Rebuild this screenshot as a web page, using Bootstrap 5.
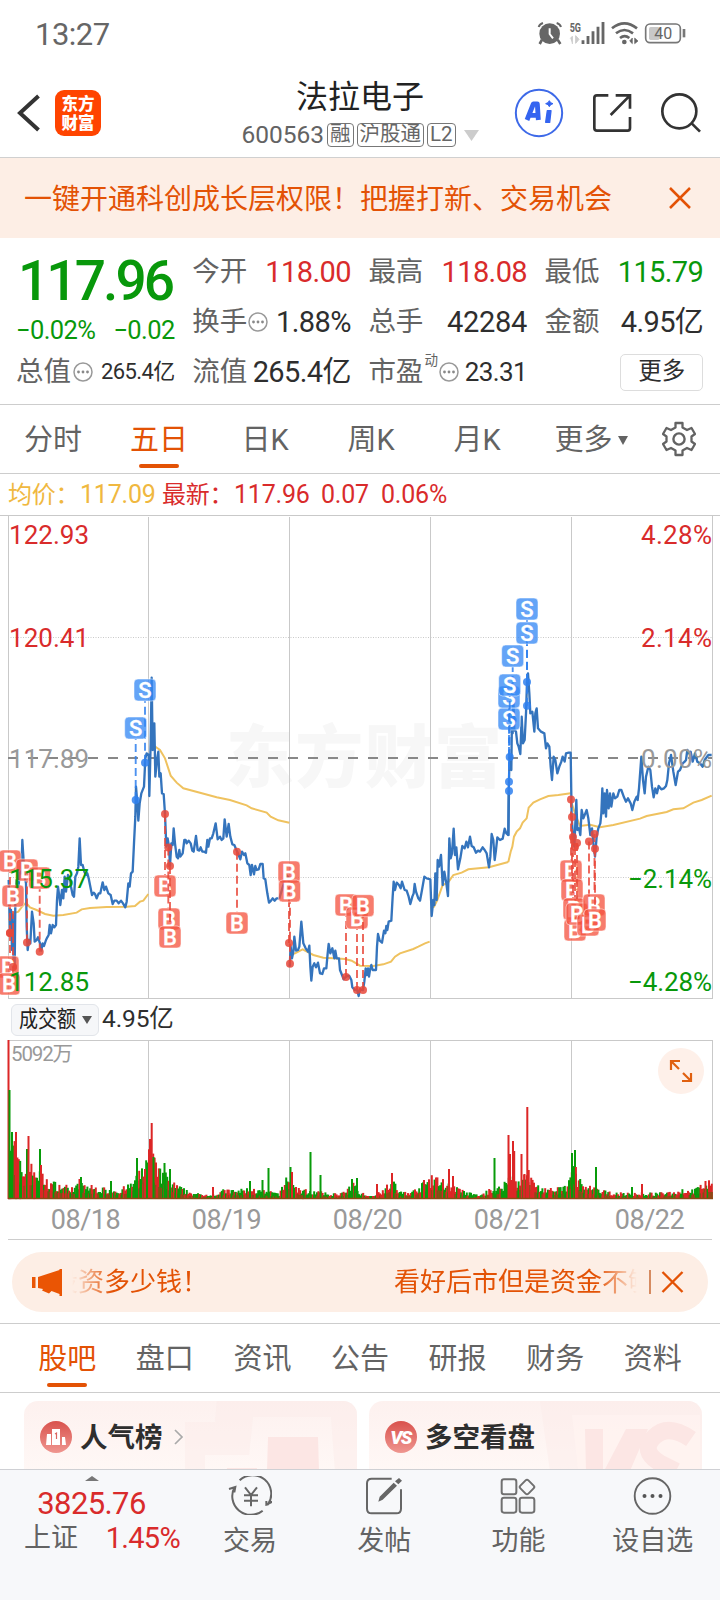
<!DOCTYPE html>
<html lang="zh-CN">
<head>
<meta charset="utf-8">
<meta name="viewport" content="width=device-width, initial-scale=1">
<title>法拉电子 600563</title>
<link href="https://cdn.jsdelivr.net/npm/bootstrap@5.3.0/dist/css/bootstrap.min.css" rel="stylesheet">
<style>
:root{--up:#d92b2b;--down:#08980b;--brand:#e35205;--ink:#2e2e2e;--sub:#636363;--rule:#cdcdcd}
body{width:720px;height:1600px;overflow:hidden;background:#fff;color:var(--ink);font-family:Roboto,"Noto Sans CJK SC",sans-serif;line-height:1}
svg{display:block;flex:none}
svg text{font-family:Roboto,"Noto Sans CJK SC",sans-serif}
.up{color:var(--up)}.down{color:var(--down)}.brand{color:var(--brand)}.sub{color:var(--sub)}
.statusbar{height:72px;padding:0 33px 4px 35px;color:#666}
.clock{font-size:31px;letter-spacing:-.5px}
.topbar{height:86px;display:grid;grid-template-columns:1fr auto 1fr;border-bottom:1px solid #d0d0d0}
.stock-title{font-size:32px;line-height:36px;color:#222;margin-top:7px}
.code{font-size:24.5px}
.tag{border:1.5px solid #777;border-radius:4px;height:24px;font-size:20.5px;line-height:21px;padding:0 2px;color:#666}
.notice{height:80px;background:#fdeee5;padding:0 28px 0 24px;font-size:28px}
.notice span{padding-top:3px}
.quote{height:167px;padding:9px 16px 0;display:grid;grid-template-columns:repeat(4,158.7px);column-gap:17.5px;border-bottom:1px solid var(--rule)}
.cell{height:50px;display:flex;align-items:center;justify-content:space-between;white-space:nowrap;font-size:29px;letter-spacing:-.6px}
.cell .sub{font-size:27.5px;letter-spacing:0}
.price{height:64px;font-size:55px;font-weight:500;letter-spacing:-2.9px;padding-left:2px;line-height:68px}
.chg{height:36px;font-size:25.5px;letter-spacing:-.6px;line-height:39px}
.more-btn{width:83px;height:37px;border:1px solid #ddd;border-radius:5px;font-size:23.5px;line-height:33px;letter-spacing:0;text-align:center;margin-left:auto}
.period{height:69px;border-bottom:1px solid var(--rule);font-size:29px;color:var(--sub)}
.period>div,.sections>div{position:relative;display:flex;align-items:center;justify-content:center;padding-top:3px}
.on{color:var(--brand)}
.on::after{content:"";position:absolute;left:50%;margin-left:-20px;width:40px;height:4px;border-radius:2px;background:var(--brand);bottom:5px}
.legend-row{height:41px;font-size:25px;padding-left:8px;letter-spacing:-.2px;white-space:nowrap}
.volhead{height:41px;padding-left:11px}
.vol-btn{width:88px;height:32px;border:1px solid #e2e5ea;border-radius:6px;background:#f6f7f9}
.dates{height:40px;border-bottom:1px solid var(--rule);margin:0 8px;padding:2px 0 0 7px;font-size:27px;color:#999;letter-spacing:-.5px}
.dates div{width:141px;text-align:center;flex:none}
.pill{height:60px;margin:12px 12px 11px;border-radius:30px;background:#fdeee5;padding-left:20px}
.ticker{width:565px;overflow:hidden;white-space:nowrap;font-size:26px;line-height:38px;margin-left:10px;-webkit-mask-image:linear-gradient(90deg,transparent,#000 40px,#000 525px,transparent);mask-image:linear-gradient(90deg,transparent,#000 40px,#000 525px,transparent)}
.sections{height:70px;border-top:1px solid var(--rule);border-bottom:1px solid var(--rule);padding:0 18.5px;font-size:29px;color:var(--sub)}
.sections>div{flex:1}
.cards{height:76px;padding:8px 18px 0 24px;gap:12px;overflow:hidden}
.promo{width:333px;height:90px;border-radius:14px;background:linear-gradient(#fdf1ef,#fff8f6 80%);overflow:hidden;position:relative}
.promo .backdrop{position:absolute;right:0;top:0}
.promo-head{position:relative;height:71px;padding-left:16px;font-size:27.500px;font-weight:700}
.promo-head span{padding-top:2px}
.dock{height:131px;background:#f7f8fa;border-top:1px solid #cfd0d4}
.dock-item{width:134.2px;font-size:27px;color:var(--sub);padding-top:6px;text-align:center}
.dock-item svg{margin:0 auto 13px}
.index-box{width:183px}
</style>
</head>
<body>
<header>
  <div class="statusbar d-flex align-items-center justify-content-between">
    <span class="clock">13:27</span>
    <svg width="150" height="26" viewBox="530 66 450 78">
      <g fill="#666"><circle cx="568" cy="104" r="31"/><path d="M545 122l-7 13M592 122l8 13" stroke="#666" stroke-width="8"/></g>
      <path d="M535 84q3-9 13-12M602 84q-3-9-13-12" fill="none" stroke="#666" stroke-width="6"/>
      <path d="M568 88v17l10 13" fill="none" stroke="#fff" stroke-width="6"/>
      <text x="628" y="98" font-size="36" font-weight="700" fill="#666" textLength="34" lengthAdjust="spacingAndGlyphs">5G</text>
      <path d="M630 118l6-6v23M646 110v23l10-12z" stroke="#ccc" fill="#ccc" stroke-width="3"/>
      <path d="M668 124v11M683 111v24M698 97v38M713 83v52M728 69v66" stroke="#666" stroke-width="8.500"/>
      <g fill="none" stroke="#666" stroke-width="8"><path d="M755 88q37-30 75 0M767 103q25-20 51 0M779 117q14-11 28 0"/></g>
      <circle cx="792" cy="129" r="7" fill="#666"/><path d="M816 117v17l-8-8zM823 117v17l10-8z" fill="#666" stroke="#666" stroke-width="2"/>
      <rect x="856" y="75" width="104" height="56" rx="13" fill="none" stroke="#777" stroke-width="5"/>
      <rect x="866" y="84" width="32" height="39" rx="5" fill="#c8c8c8"/><path d="M971 90v25" stroke="#777" stroke-width="8"/>
      <text x="882" y="120" font-size="50" fill="#666" textLength="54" lengthAdjust="spacingAndGlyphs">40</text>
    </svg>
  </div>
  <div class="topbar">
    <div class="d-flex align-items-center pb-1" style="padding-left:17px">
      <svg width="24" height="38" viewBox="0 0 24 38"><path d="M21.500 2L3 19l18.500 17" fill="none" stroke="#333" stroke-width="4"/></svg>
      <svg style="margin-left:14px" width="46" height="46" viewBox="0 0 46 46"><rect width="46" height="46" rx="9" fill="#ff4400"/><g fill="#fff" font-weight="900" font-size="16.500" text-anchor="middle"><text x="23" y="19.500">东方</text><text x="23" y="38.500">财富</text></g></svg>
    </div>
    <div class="text-center">
      <div class="stock-title">法拉电子</div>
      <div class="sub d-flex align-items-center justify-content-center mt-2" style="gap:3px">
        <span class="code">600563</span><span class="tag">融</span><span class="tag">沪股通</span><span class="tag">L2</span>
        <svg style="margin-left:5px" width="15" height="11"><path d="M0 0h15L7.500 11z" fill="#ccc"/></svg>
      </div>
    </div>
    <div class="d-flex align-items-center justify-content-end pb-1" style="gap:26.5px;padding-right:17px">
      <svg width="50" height="50" viewBox="462 264 150 150"><circle cx="537" cy="339" r="69.500" fill="#fff" stroke="#3d69e8" stroke-width="6"/><g stroke="#3464f0" stroke-linejoin="round"><path d="M501 360L520 312h12l3 48M508 346h26" fill="none" stroke-width="14.500"/><path d="M562 332h11l-4 35h-12z" fill="#3464f0" stroke-width="4"/><path d="M568 302l4 6 7 3-7 3-4 6-4-6-7-3 7-3z" fill="#3464f0" stroke-width="3"/></g></svg>
      <svg width="42" height="42" viewBox="690 276 126 126"><g fill="none" stroke="#333" stroke-width="8"><path d="M742 286h-34q-8 0-8 8v90q0 8 8 8h92q7 0 7-8v-33"/><path d="M764 286h43v40M807 286l-58 59"/></g></svg>
      <svg width="44" height="44" viewBox="896 272 132 132"><g fill="none" stroke="#333" stroke-width="8"><circle cx="957" cy="333" r="51"/><path d="M994 369l25 25"/></g></svg>
    </div>
  </div>
</header>

<div class="notice brand d-flex align-items-center justify-content-between">
  <span>一键开通科创成长层权限！把握打新、交易机会</span>
  <svg width="24" height="24"><path d="M2 2l20 20M22 2L2 22" stroke="#e35205" stroke-width="2.500"/></svg>
</div>

<section class="quote">
  <div>
    <div class="price down">117.96</div>
    <div class="chg down d-flex justify-content-between"><span>−0.02%</span><span>−0.02</span></div>
    <div class="cell"><span class="sub d-flex align-items-center" style="gap:2px">总值<svg width="20" height="20"><use href="#dots"/></svg></span><span style="font-size:22px">265.4亿</span></div>
  </div>
  <div>
    <div class="cell"><span class="sub">今开</span><span class="up">118.00</span></div>
    <div class="cell"><span class="sub d-flex align-items-center" style="gap:1px">换手<svg width="20" height="20"><use href="#dots"/></svg></span><span>1.88%</span></div>
    <div class="cell"><span class="sub">流值</span><span>265.4亿</span></div>
  </div>
  <div>
    <div class="cell"><span class="sub">最高</span><span class="up">118.08</span></div>
    <div class="cell"><span class="sub">总手</span><span style="letter-spacing:-.3px">42284</span></div>
    <div class="cell"><span class="sub d-flex align-items-center">市盈<sup style="font-size:13.500px;top:-12px;margin:0 1px">动</sup><svg width="20" height="20"><use href="#dots"/></svg></span><span style="font-size:26px">23.31</span></div>
  </div>
  <div>
    <div class="cell"><span class="sub">最低</span><span class="down">115.79</span></div>
    <div class="cell"><span class="sub">金额</span><span>4.95亿</span></div>
    <div class="cell"><span class="more-btn">更多</span></div>
  </div>
</section>
<svg width="0" height="0" style="position:absolute"><defs><g id="dots"><circle cx="10" cy="10" r="9" fill="none" stroke="#999" stroke-width="1.500"/><g fill="#888"><circle cx="5.500" cy="10" r="1.400"/><circle cx="10" cy="10" r="1.400"/><circle cx="14.500" cy="10" r="1.400"/></g></g></defs></svg>

<nav class="period d-flex">
  <div style="width:106px">分时</div><div class="on" style="width:106px">五日</div><div style="width:106px">日K</div><div style="width:106px">周K</div><div style="width:106px">月K</div>
  <div style="width:122px;gap:5px">更多<svg width="10" height="9"><path d="M0 0h10L5 9z" fill="#636363"/></svg></div>
  <div class="ms-auto pt-0" style="padding-right:24px"><svg width="34" height="36" viewBox="-17 -18 34 36"><path d="M-3.500-16h7v4.500l4.500 2.500 4.500-2 3.500 6-3.500 2.500v5l3.500 2.500-3.500 6-4.500-2-4.500 2.500V16h-7v-4.500L-8 9l-4.500 2-3.500-6 3.500-2.500v-5L-16-5l3.500-6L-8-9l4.500-2.500z" fill="none" stroke="#636363" stroke-width="2.300" stroke-linejoin="round"/><circle r="5.600" fill="none" stroke="#636363" stroke-width="2.400"/></svg></div>
</nav>

<div class="legend-row d-flex align-items-center up">
  <span style="width:72px;color:#f0b840;font-size:24px">均价：</span><span style="width:82px;color:#f0b840">117.09</span><span style="width:72px;font-size:24px">最新：</span><span style="width:87px">117.96</span><span style="width:60px">0.07</span><span>0.06%</span>
</div>

<svg id="priceChart" width="720" height="484" viewBox="0 515 720 484">
  <text x="226" y="782" font-size="68" font-weight="900" fill="#f7f7f7" textLength="276">东方财富</text>
  <g stroke="#c9c9c9" stroke-width="1"><path d="M0 515.500H720M8.500 515v483M148.500 517v481M289.500 517v481M430.500 517v481M571.500 517v481M712.500 515v483M8 998.500h705" fill="none"/><path d="M8 637.500h704M8 877.500h704" stroke-dasharray="1 1.500" /></g>
  <path d="M8 758H712" stroke="#888" stroke-width="1.800" stroke-dasharray="10 10"/>
  <g fill="none" stroke="#efc25f" stroke-width="6">
    <g transform="translate(0,510) scale(.33333)"><polyline points="26,1230 40,1210 55,1205 66,1190 78,1178 90,1192 110,1200 135,1212 160,1217 190,1215 230,1208 245,1198 270,1194 320,1191 380,1190 405,1188 420,1175 430,1172 445,1152"/><polyline points="463,708 480,720 495,745 512,797 530,818 550,835 600,848 650,862 690,870 740,886 755,895 800,908 812,920 835,931 868,938"/></g>
    <g transform="translate(280,740) scale(.33333)"><polyline points="29,645 45,640 68,628 85,637 100,645 130,653 160,655 195,657 215,662 240,677 280,678 310,673 333,665 345,650 360,640 400,627 415,620 435,610 449,605"/><polyline points="451,505 462,500 472,480 488,435 504,428 520,405 545,398 565,388 627,382 685,366"/></g>
    <g transform="translate(480,580) scale(.33333)"><polyline points="85,846 92,815 97,800 102,770 110,755 120,745 128,728 140,715 146,683 160,668 180,658 205,648 235,645 272,640"/><polyline points="275,670 285,700 300,738 330,734 360,742 400,735 480,716 500,708 560,696 580,688 610,685 640,668 665,660 695,647"/></g>
  </g>
  <g fill="none" stroke="#3474bd" stroke-width="7" stroke-linejoin="round">
    <g transform="translate(0,510) scale(.33333)"><polyline points="26,1110 28,1180 30,1270 33,1200 36,1320 38,1215 41,1370 44,1375 46,1180 50,1110 56,1125 60,1080 64,1090 67,990 70,1040 74,1100 78,1120 80,1250 83,1320 87,1290 91,1300 96,1205 101,1240 104,1295 110,1290 114,1282 120,1300 124,1322 128,1300 132,1308 138,1290 142,1282 146,1275 149,1245 153,1270 158,1245 163,1252 168,1245 171,1170 174,1130 178,1160 181,1185 186,1140 190,1165 194,1100 198,1145 204,1095 210,1105 213,1130 218,1155 222,1160 226,1100 231,1090 235,1070 239,985 243,1065 248,1065 253,1085 258,1095 262,1090 266,1105 270,1125 276,1155 281,1148 285,1152 290,1165 296,1150 301,1150 308,1117 313,1140 318,1130 325,1150 332,1155 338,1182 343,1172 350,1172 356,1180 363,1172 369,1180 376,1192 380,1175 385,1120 389,1130 393,1090 398,1085 402,1000 406,920 408,830 412,880 415,932 419,880 424,850 432,830 436,745 440,730 446,735 448,858 452,700 455,503 458,720 463,640 466,800 471,750 475,725 478,800 482,790 486,850 491,852 495,912 499,1010 503,985 507,1010 510,1067 514,1000 518,1005 521,955 525,1000 530,1040 534,1045 538,1020 541,1040 548,1030 553,990 557,990 560,1000 566,992 572,1000 577,1022 581,1025 588,978 593,1020 598,1022 602,1012 607,1025 612,1025 618,1028 622,990 625,1010 630,985 635,985 640,970 647,940 653,988 660,980 665,990 670,985 674,928 680,980 686,942 691,980 697,1003 703,1005 711,1024 716,1035 721,1048 726,1025 732,1035 736,1030 742,1060 748,1065 752,1095 756,1065 762,1093 766,1068 770,1080 776,1078 781,1062 788,1062 791,1105 796,1108 799,1130 802,1150 807,1178 813,1172 818,1165 824,1172 830,1165 838,1165 850,1125 858,1095 864,1100 868,1120"/></g>
    <g transform="translate(280,740) scale(.33333)"><polyline points="29,680 32,620 36,655 40,635 43,590 48,632 54,630 58,620 64,545 70,610 77,625 84,635 88,617 91,680 94,722 98,680 103,670 108,682 114,668 120,700 127,702 132,685 139,685 143,640 146,612 151,640 157,625 163,655 166,632 170,655 177,655 180,690 186,705 191,718 196,712 202,708 208,708 214,720 217,742 224,750 231,748 236,768 240,748 249,750 253,725 257,685 260,705 264,685 267,710 270,690 274,675 278,690 288,690 291,620 294,582 299,602 306,608 312,572 316,580 319,558 322,570 326,545 334,542 338,470 341,425 345,450 350,428 357,435 362,445 366,425 374,450 380,452 386,470 391,492 397,470 401,460 404,432 408,455 415,475 420,482 426,450 433,410 440,415 451,418 455,528 460,480 463,495 466,400 470,480 473,360 477,380 483,345 488,435 493,395 499,430 504,468 508,295 512,355 516,340 521,266 525,345 529,322 534,388 541,355 547,318 554,325 559,305 564,322 570,290 575,318 581,322 588,338 594,332 600,335 608,322 614,330 620,340 627,382 631,350 635,282 640,300 644,360 648,330 652,292 660,300 668,296 674,266 679,280 685,285 687,150"/></g>
    <g transform="translate(480,580) scale(.33333)"><polyline points="85,767 86,633 88,560 91,530 94,570 96,400 98,460 100,360 103,450 108,455 112,490 116,500 121,522 125,410 129,490 134,480 138,400 141,305 144,280 148,340 151,400 157,395 163,455 166,400 170,385 174,445 183,455 193,460 198,505 202,490 208,500 212,560 216,600 221,530 226,540 232,580 238,560 244,545 248,530 254,545 258,520 266,518 272,518 275,710 279,770 283,800 289,660 292,750 297,745 301,765 305,690 310,715 316,700 320,690 325,715 331,765 336,745 341,800 345,830 350,770 355,745 361,730 364,700 367,625 370,700 374,640 378,710 381,630 386,685 390,640 394,680 400,640 405,655 412,650 418,630 424,630 432,652 438,665 444,655 452,670 457,690 463,665 470,650 473,660 477,625 484,530 489,600 494,640 498,590 505,560 511,570 516,620 521,652 526,625 531,640 536,618 544,628 552,625 558,618 562,600 567,550 573,525 580,575 587,615 594,575 600,570 608,550 614,545 618,540 622,510 626,520 632,515 638,545 645,520 652,545 660,550 668,560 674,540 685,525 695,525"/></g>
  </g>
  <g id="trades"></g>
  <g font-size="26">
    <g fill="#d92b2b"><text x="9" y="544" textLength="80">122.93</text><text x="9" y="647" textLength="80">120.41</text><text x="641" y="544" textLength="71">4.28%</text><text x="641" y="647" textLength="71">2.14%</text></g>
    <g fill="#999"><text x="9" y="768" textLength="80">117.89</text><text x="641" y="768" textLength="71">0.00%</text></g>
    <g fill="#08980b"><text x="9" y="888" textLength="80">115.37</text><text x="9" y="991" textLength="80">112.85</text><text x="628" y="888" textLength="84">−2.14%</text><text x="628" y="991" textLength="84">−4.28%</text></g>
  </g>
</svg>

<div class="volhead d-flex align-items-center">
  <div class="vol-btn"><svg width="86" height="30"><text x="7" y="22" font-size="22.500" fill="#222" textLength="57" lengthAdjust="spacingAndGlyphs">成交额</text><path d="M70 11h10l-5 8z" fill="#555"/></svg></div>
  <span style="font-size:24.500px;margin-left:3px;letter-spacing:-.1px">4.95亿</span>
</div>
<svg id="volumeChart" width="720" height="160" viewBox="0 1040 720 160">
  <path d="M8 1040.500h705M8.500 1040v159M148.500 1040v159M289.500 1040v159M430.500 1040v159M571.500 1040v159M712.500 1040v159" fill="none" stroke="#c9c9c9"/>
  <g id="volumeBars"></g>
  <text x="11" y="1061" font-size="20.500" fill="#999" textLength="62">5092万</text>
  <circle cx="681" cy="1071" r="23" fill="#fef0e9"/>
  <path d="M671 1070v-9h9M671 1061l8 8M691 1073v8h-9M691 1081l-8-8" fill="none" stroke="#e06010" stroke-width="2.200"/>
</svg>
<div class="dates d-flex align-items-center"><div>08/18</div><div>08/19</div><div>08/20</div><div>08/21</div><div>08/22</div></div>

<div class="pill d-flex align-items-center brand">
  <svg width="30" height="27"><path d="M0 8h3.500v11H0zM6 8L27.500 1V0H30v27h-2.500v-2l-8-3-2.500 2.500-7-3 1-1.500-5-1z" fill="#ea5504"/></svg>
  <div class="ticker"><span class="d-inline-block" style="margin-left:-20px;width:342px">投资多少钱！</span><span>看好后市但是资金不够</span></div>
  <svg style="margin-left:12px" width="2" height="24"><path d="M1 0v24" stroke="#c96a35" stroke-width="1.500"/></svg>
  <svg style="margin-left:10px" width="24" height="24"><path d="M1.500 2l20 20M21.500 2l-20 20" stroke="#e35205" stroke-width="2.400"/></svg>
</div>

<nav class="sections d-flex"><div class="on">股吧</div><div>盘口</div><div>资讯</div><div>公告</div><div>研报</div><div>财务</div><div>资料</div></nav>

<div class="cards d-flex">
  <div class="promo">
    <svg class="backdrop" width="180" height="70"><path d="M40 0h140v70h-22L154 16H76l-4 38H28v16H8V21h30z" fill="#fcebe9" opacity=".5"/><path d="M91 36h50l1 34H90z" fill="#fce6e4"/><path d="M50 67h30v4H50z" fill="#fce6e4"/></svg>
    <div class="promo-head d-flex align-items-center">
      <svg width="32" height="32"><defs><linearGradient id="rg" x2="0" y2="1"><stop stop-color="#d9524d"/><stop offset="1" stop-color="#ef9690"/></linearGradient></defs><circle cx="16" cy="16" r="16" fill="url(#rg)"/><path d="M7 13h4v11H6zM12 8h8v16h-8zM22 16h3l1 8h-4z" fill="#fff"/><path d="M15 13l1.500-1v6" fill="none" stroke="#d96662" stroke-width="1.200"/></svg>
      <span style="margin-left:8px">人气榜</span>
      <svg style="margin-left:11px" width="10" height="16"><path d="M1 1l7 7-7 7" fill="none" stroke="#aaa" stroke-width="1.700"/></svg>
    </div>
  </div>
  <div class="promo">
    <svg class="backdrop" width="164" height="70"><path d="M2 0h162v70H12z" fill="#fcebe9" opacity=".5"/><path d="M34 14h128v56H40z" fill="#fff3f1" opacity=".7"/><path d="M47 28h18v42H48zM66 70L88 28h22L92 70z" fill="#fce6e4"/><path d="M153 38Q130 22 116 36T122 62L138 70" fill="none" stroke="#fce6e4" stroke-width="17"/></svg>
    <div class="promo-head d-flex align-items-center">
      <svg width="32" height="32"><circle cx="16" cy="16" r="16" fill="url(#rg)"/><text x="15.500" y="23" text-anchor="middle" fill="#fff" font-weight="900" font-style="italic" font-size="19" letter-spacing="-1.500">VS</text></svg>
      <span style="margin-left:8px">多空看盘</span>
    </div>
  </div>
</div>

<footer class="dock d-flex">
  <div class="index-box text-center">
    <svg class="mx-auto" style="margin-top:6px" width="14" height="5"><path d="M0 5l7-5 7 5z" fill="#777"/></svg>
    <div class="up" style="font-size:31px;margin-top:7px;letter-spacing:-.6px">3825.76</div>
    <div class="d-flex justify-content-between align-items-center" style="padding:1px 3px 0 24px;font-size:27px;line-height:36px"><span class="sub">上证</span><span class="up" style="font-size:29px;letter-spacing:-.7px">1.45%</span></div>
  </div>
  <div class="dock-item"><svg width="44" height="39" viewBox="684 708 132 117"><g fill="none" stroke="#666" stroke-width="6"><path d="M719 721a56 56 0 0 1 85 72l-5 1v-11M800 794l17-9M788 812a56 56 0 0 1-84-71M687 747l19-6-3 16M735 742l18 23 18-23M753 765v34M732 766h42M732 782h42"/></g></svg>交易</div>
  <div class="dock-item"><svg width="38" height="39" viewBox="18 708 114 117"><g fill="none" stroke="#666" stroke-width="6"><path d="M98 716H38q-14 0-14 14v76q0 14 14 14h74q14 0 14-14v-58"/></g><path d="M58 785l4-15 42-42 10 9-43 42zM108 724l12-10 9 8-11 11z" fill="#666"/></svg>发帖</div>
  <div class="dock-item"><svg width="36" height="39" viewBox="423 708 108 117"><g fill="none" stroke="#707070" stroke-width="6"><rect x="428" y="718" width="44" height="45" rx="7"/><rect x="428" y="773" width="44" height="45" rx="7"/><rect x="482" y="773" width="44" height="45" rx="7"/><rect x="487" y="724" width="34" height="34" rx="6" transform="rotate(45 504 741)"/></g></svg>功能</div>
  <div class="dock-item"><svg width="39" height="39" viewBox="0 0 39 39"><circle cx="19.500" cy="20" r="17.800" fill="none" stroke="#666" stroke-width="1.900"/><g fill="#555"><circle cx="11.500" cy="20" r="2"/><circle cx="19.500" cy="20" r="2"/><circle cx="27.500" cy="20" r="2"/></g></svg>设自选</div>
</footer>

<script src="https://cdn.jsdelivr.net/npm/bootstrap@5.3.0/dist/js/bootstrap.bundle.min.js"></script>
<script>
// Trades: side, label x, label y, dot x, dot y
const trades = [
  ['B',10,861,10,933],['B',27,870,27,942.5],['B',39.500,878,39.700,951.700],['B',13,896,13,967],['B',8,967,10,933],['B',9,984,13,967],
  ['B',165,886,165,814],['B',169,919,168.300,847.500],['B',170,937,170,866],['B',237,923,237,851.700],
  ['B',289,872,289,943],['B',289.500,891,290,963.700],
  ['B',346,905,346,977],['B',357,918,357,990],['B',363,905.700,363,990],
  ['B',571,871,571,799.500],['B',572,890,572,817],['B',575,930,575,847],['B',574,909,573,837],['B',577,914,577,843],
  ['B',588,925,589,841.500],['B',594,905,594.500,834],['B',595,920,595,848.700],
  ['S',145,690,145,762.700],['S',135.700,728,135.700,800],
  ['S',527,609,527,682],['S',527,633,527,705.700],['S',512.700,656,512.700,720],['S',509,719,509,791],['S',509,697,509,781.700],['S',509.700,685,509.700,757]
];
document.getElementById('trades').innerHTML = trades.map(([side, x, y, dx, dy]) => {
  const c = side === 'B' ? ['#f5533f', '#e8483a'] : ['#3387f5', '#2f80ee'];
  return `<g><path d="M${dx} ${dy}V${y + (dy > y ? 11 : -11)}" stroke="${c[1]}" stroke-width="1.900" stroke-dasharray="8 4" opacity=".85"/>
  <rect x="${x - 11}" y="${y - 11}" width="22" height="22" rx="4" fill="${c[0]}" fill-opacity=".76" stroke="#fff" stroke-opacity=".5"/>
  <text x="${x}" y="${y + 8}" text-anchor="middle" font-size="22" font-weight="500" fill="#fff" stroke="#fff" stroke-width=".3">${side}</text>
  <circle cx="${dx}" cy="${dy}" r="4" fill="${c[1]}" fill-opacity=".85"/></g>`;
}).join('');

// Turnover: typical level along the axis, plus the outstanding minutes
const level = [[8,90],[10,65],[14,50],[18,35],[22,25],[27,28],[35,27],[40,22],[46,16],[60,12],[75,10],[80,13],[100,9],[120,8],[130,12],[140,22],[148,40],[153,38],[157,25],[166,20],[172,14],[182,9],[190,6],[200,4],[215,4],[225,8],[235,7],[250,9],[260,7],[280,5],[288,22],[292,14],[300,8],[320,6],[330,4],[345,6],[355,14],[360,6],[370,2],[376,5],[385,9],[392,16],[400,6],[412,6],[422,12],[430,18],[440,17],[448,13],[455,10],[465,6],[480,3],[490,8],[500,10],[510,20],[516,16],[525,20],[530,18],[540,10],[555,8],[568,12],[573,30],[577,20],[585,10],[592,10],[600,7],[620,5],[660,5],[672,6],[685,8],[695,8],[705,14],[712,14]];
const peaks = [['r',8.500,159],['g',9.500,109],['g',12,67],['r',16,67],['g',27,50],['r',28.500,63],['g',40,50],['r',41,34],['r',79.500,20],['g',81,22],['g',111,18],['g',137,41],['r',145,30],['r',150,60],['r',151.700,76],['g',153.500,42],['g',164.500,36],['g',170,30],['r',213,12],['g',250,18],['g',262.500,19],['g',268.500,31],['g',290.500,32],['r',292,27],['g',310.500,47],['g',320.500,24],['g',352,20],['g',357,21],['r',377,15],['r',392,26],['r',424,19],['r',449,30],['r',453,23],['g',494.500,41],['r',508.500,64],['r',510,45],['r',513,58],['r',514.200,48],['r',521.500,45],['r',524.500,25],['r',527.300,92],['r',528.700,29],['g',572,46],['g',575,49],['r',575.900,32],['g',596,32],['g',632,12],['r',642,15],['r',705.500,18]];
const col = {r: '#dc2626', g: '#089b0a', m: '#8a4b16'};
let seed = 7, bars = '';
const rnd = () => (seed = (seed * 16807) % 2147483647) / 2147483647;
const bar = (k, x, h) => `<rect x="${(x - 1).toFixed(1)}" y="${(1199 - h).toFixed(1)}" width="2" height="${h.toFixed(1)}" fill="${col[k]}"/>`;
for (let x = 9, i = 0; x < 712; x += 1.400) {
  while (i < level.length - 2 && level[i + 1][0] < x) i++;
  const [x0, a] = level[i], [x1, b] = level[i + 1];
  const base = a + (b - a) * (x - x0) / (x1 - x0);
  const h = Math.max(3, base * (.6 + rnd() * .75)), up = rnd() < .5;
  bars += bar(up ? 'r' : 'g', x, h) + bar(rnd() < .4 ? 'm' : up ? 'r' : 'g', x, Math.min(h, base * .5));
}
bars += peaks.map(p => bar(...p)).join('') + '<path d="M8 1198.500h705" stroke="#8a4b16" stroke-width="1.500"/>';
document.getElementById('volumeBars').innerHTML = bars;
</script>
</body>
</html>
